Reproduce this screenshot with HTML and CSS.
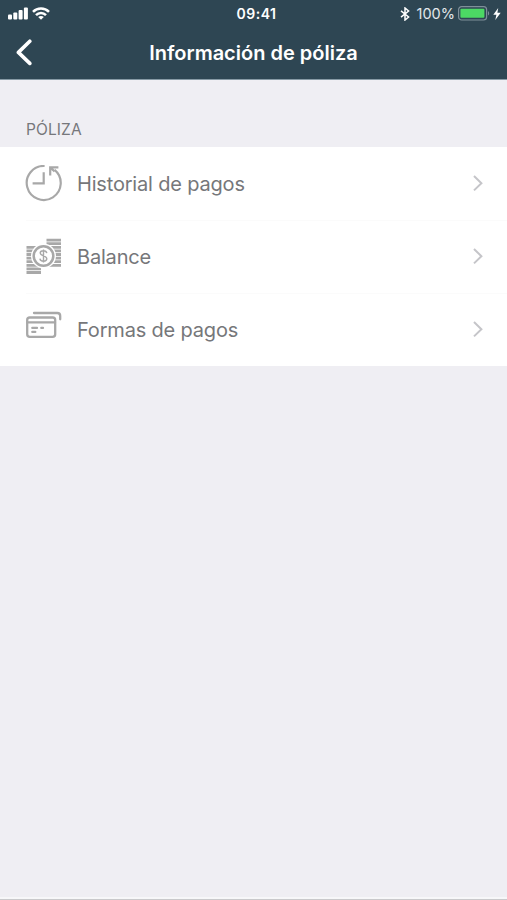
FILE: index.html
```html
<!DOCTYPE html>
<html lang="es">
<head>
  <meta charset="UTF-8" />
  <meta name="viewport" content="width=device-width, initial-scale=1.0" />
  <title>Información de póliza</title>
  <link rel="stylesheet" href="styles.css">
</head>
<body>
  <header class="header">
    <div class="status-bar">
      <div class="status-left">
        <svg class="signal" width="20" height="13" viewBox="0 0 20 13" fill="#fff">
          <rect x="0" y="7.5" width="4" height="5" rx="1" />
          <rect x="5.3" y="5.5" width="4" height="7" rx="1" />
          <rect x="10.6" y="3" width="4" height="9.5" rx="1" />
          <rect x="15.9" y="0.5" width="4" height="12" rx="1" />
        </svg>
        <svg class="wifi" width="18" height="13" viewBox="0 0 18 13" fill="none" stroke="#fff" stroke-width="2.5">
          <path d="M1 4.8C5.4 .4 12.6 .4 17 4.8" />
          <path d="M4 8.2C6.8 5.3 11.2 5.3 14 8.2" />
          <path d="M9 12.8L6.2 10C7.8 8.6 10.2 8.6 11.8 10Z" fill="#fff" stroke="none" />
        </svg>
      </div>
      <span class="time">09:41</span>
      <div class="status-right">
        <svg class="bluetooth" width="10" height="14" viewBox="0 0 10 14" fill="none" stroke="#fff" stroke-width="1.5">
          <path d="M1 3.8L8.6 10L5 13V1L8.6 4L1 10.2" />
        </svg>
        <span class="percent">100%</span>
        <svg class="battery" width="32" height="15" viewBox="0 0 32 15">
          <rect x=".6" y=".6" width="28" height="13.4" rx="3" fill="none" stroke="#7f8f99" stroke-width="1.2" />
          <rect x="2.4" y="2.8" width="24" height="9" rx="1" fill="#4cd964" />
          <path d="M30 5C31.6 5.8 31.6 8.8 30 9.6Z" fill="#7f8f99" />
        </svg>
        <svg class="bolt" width="8" height="12" viewBox="0 0 8 12" fill="#fff">
          <path d="M5.2 0L.3 6.8H3.4L2.3 12L7.7 4.8H4.4Z" />
        </svg>
      </div>
    </div>
    <div class="nav-bar">
      <a class="back" href="#" aria-label="Atrás">
        <svg width="18" height="28" viewBox="0 0 18 28" fill="none" stroke="#fff" stroke-width="3.6" stroke-linecap="round" stroke-linejoin="round">
          <path d="M14.8 2.2L3.4 13.4L14.8 24.4" />
        </svg>
      </a>
      <h1 class="title">Información de póliza</h1>
    </div>
  </header>

  <main class="content">
    <h2 class="section-title">PÓLIZA</h2>
    <ul class="menu">
      <li class="menu-item">
        <svg class="icon" width="38" height="38" viewBox="0 0 38 38" fill="none" stroke="#a8a8a8" stroke-width="2.2">
          <path d="M19.6 1A17 17 0 1 0 29.6 4.9" />
          <path d="M18.7 7.3V18.3H7.6" />
          <path d="M25.2 10.6V2.4H33.4M25.4 2.6L29.6 6.4" />
        </svg>
        <span class="label">Historial de pagos</span>
        <svg class="chevron" width="10" height="18" viewBox="0 0 10 18"><path d="M1 1L8.4 8.2L1 15.4" /></svg>
      </li>
      <li class="menu-item">
        <svg class="icon" width="38" height="38" viewBox="0 0 38 38" fill="none" stroke="#a8a8a8">
          <g stroke-width="2.8">
            <path d="M21.5 2.1H36M21.5 5.7H36M21.5 9.3H36M21.5 12.9H36M21.5 16.5H36M21.5 20.1H36M21.5 23.7H36M21.5 27.3H36" />
            <path d="M1.5 9.3H16M1.5 12.9H16M1.5 16.5H16M1.5 20.1H16M1.5 23.7H16M1.5 27.3H16M1.5 30.9H16M1.5 34.5H16" />
          </g>
          <circle cx="18.5" cy="18" r="12.5" fill="#fff" stroke="none" />
          <circle cx="18.5" cy="18" r="9.8" stroke-width="2.5" />
          <path d="M21.8 15.1C21.3 11.9 15.2 12 15.2 15.1C15.2 18.4 21.8 17.2 21.8 20.8C21.8 24 15.4 24.2 14.9 20.7M18.5 11.4V24.6" stroke-width="1.4" />
        </svg>
        <span class="label">Balance</span>
        <svg class="chevron" width="10" height="18" viewBox="0 0 10 18"><path d="M1 1L8.4 8.2L1 15.4" /></svg>
      </li>
      <li class="menu-item">
        <svg class="icon" width="38" height="38" viewBox="0 0 38 38" fill="none" stroke="#a8a8a8" stroke-width="2.3" stroke-linecap="round">
          <rect x="2.2" y="6.5" width="28" height="19.4" rx="2.6" />
          <path d="M2.4 11.4H30" />
          <path d="M9 2H32.3Q35.2 2 35.2 4.9V8.3" />
          <path d="M7.3 16.9H12M16.3 16.9H18M7.3 20.9H10.3" />
        </svg>
        <span class="label">Formas de pagos</span>
        <svg class="chevron" width="10" height="18" viewBox="0 0 10 18"><path d="M1 1L8.4 8.2L1 15.4" /></svg>
      </li>
    </ul>
  </main>
  <footer class="bottom-edge"></footer>
</body>
</html>
```
FILE: styles.css
```css
* {
  box-sizing: border-box;
  margin: 0;
  padding: 0;
}

body {
  display: flex;
  flex-direction: column;
  height: 100vh;
  background: #efeef3;
  font-family: Inter, "Liberation Sans", sans-serif;
  overflow: hidden;
}

svg {
  display: block;
  flex-shrink: 0;
}

.header {
  height: 80px;
  background: #2e4653;
  border-bottom: 1px solid #879aa5;
  color: #fff;
}

.status-bar {
  display: grid;
  grid-template-columns: 1fr auto 1fr;
  align-items: center;
  height: 27px;
  padding: 0 6px 0 8px;
}

.status-left,
.status-right {
  display: flex;
  align-items: center;
}

.status-left {
  gap: 4px;
}

.status-right {
  justify-content: flex-end;
}

.time {
  padding-left: 4px;
  font-size: 14px;
  font-weight: 600;
  letter-spacing: 0.5px;
}

.percent {
  margin: 0 3px 0 7px;
  font-size: 14.5px;
  color: #e3e8eb;
}

.bolt {
  margin-left: 3px;
}

.nav-bar {
  display: grid;
  grid-template-columns: 60px 1fr 60px;
  align-items: center;
  height: 51px;
}

.back {
  padding-left: 15px;
}

.title {
  font-size: 20px;
  font-weight: 600;
  text-align: center;
}

.content {
  flex: 1;
}

.section-title {
  height: 67px;
  padding: 40px 26px 0;
  font-size: 15.5px;
  font-weight: 400;
  letter-spacing: 0.1px;
  line-height: 20px;
  color: #76777b;
}

.menu {
  list-style: none;
  background: #fff;
}

.menu-item {
  display: flex;
  align-items: center;
  height: 73px;
  padding: 0 24px 0 25px;
}

.menu-item + .menu-item {
  background: linear-gradient(#fbfbfb, #fbfbfb) 26px 0 / 100% 1px no-repeat;
}

.label {
  flex: 1;
  margin-left: 14px;
  font-size: 20px;
  letter-spacing: -0.18px;
  color: #76777a;
}

.chevron {
  fill: none;
  stroke: #c5c5c9;
  stroke-width: 2;
}

.bottom-edge {
  height: 3px;
  background: #f7f7f9;
  border-bottom: 1px solid #c9c9cb;
}
```
